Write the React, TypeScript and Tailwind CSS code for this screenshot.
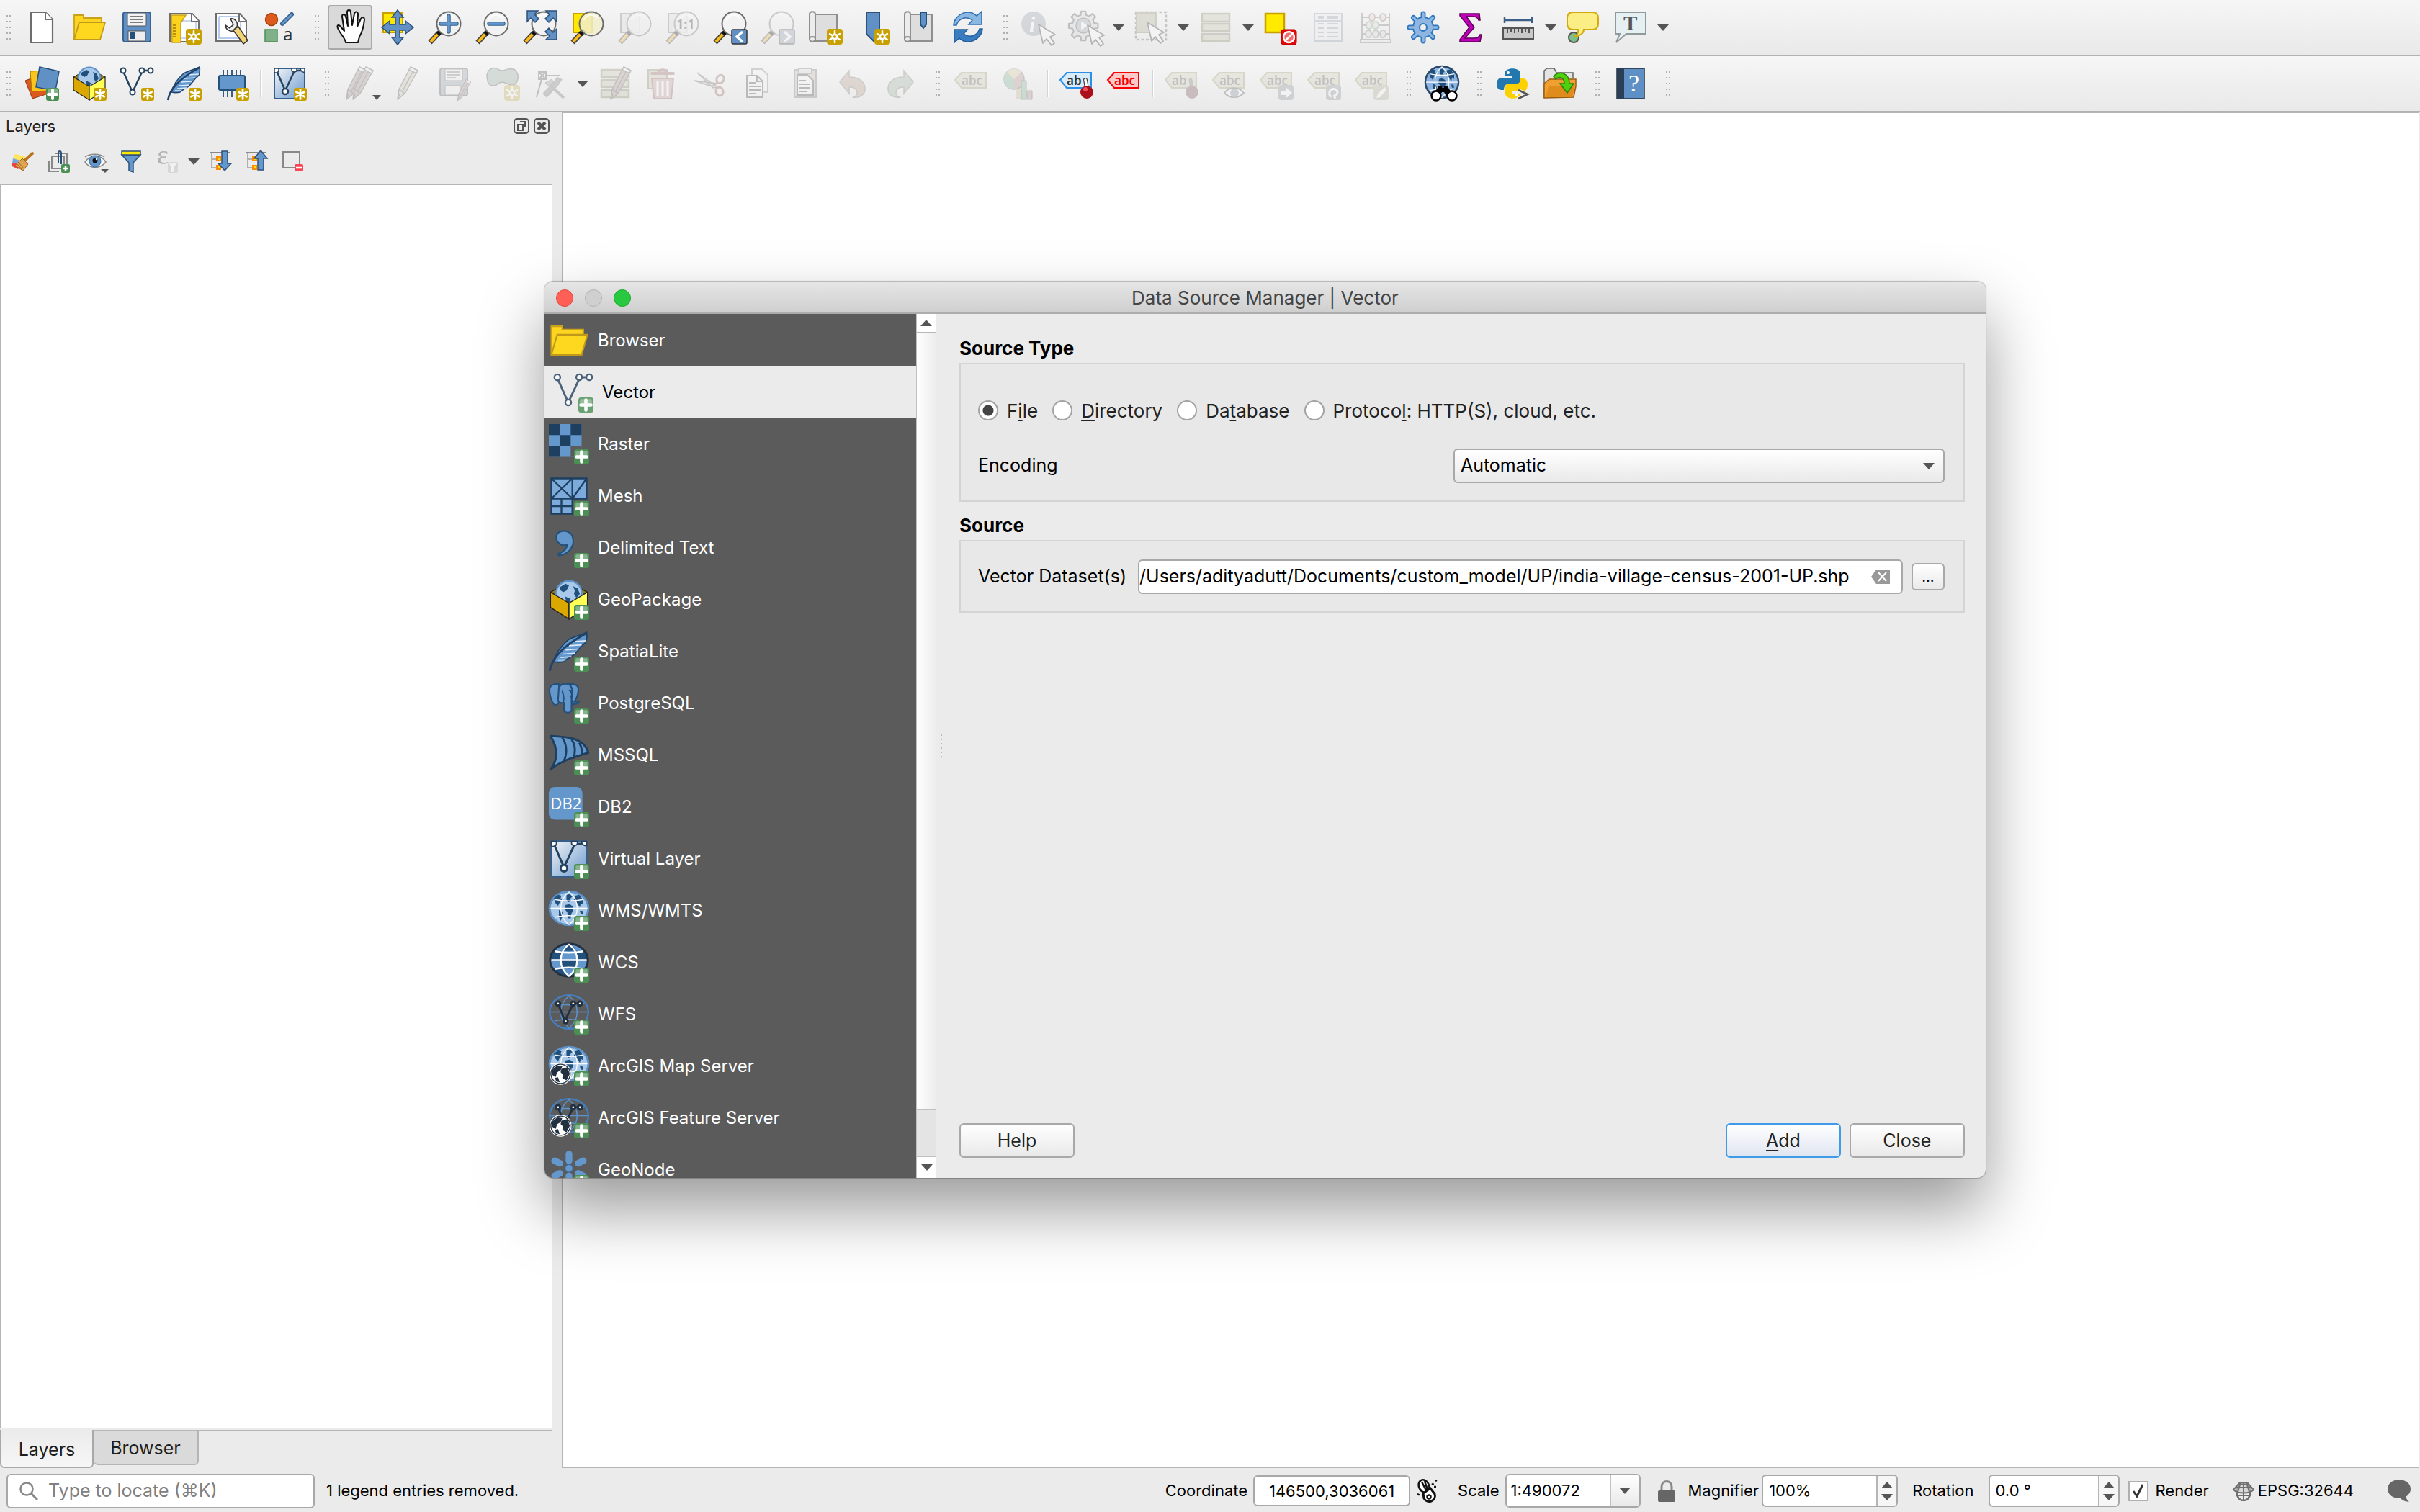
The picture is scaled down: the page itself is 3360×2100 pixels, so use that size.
import React from "react";

type Kids = { children?: React.ReactNode };

/* ---------- shared icon parts (48 x 48 grid) ---------- */

function Svg({ children }: Kids) {
  return (
    <svg viewBox="0 0 48 48" className="size-full overflow-visible" fill="none" aria-hidden="true">
      {children}
    </svg>
  );
}

function Plus() {
  return (
    <g>
      <rect x="30" y="30" width="18" height="18" rx="3" fill="#4b8f55" />
      <rect x="32" y="32" width="14" height="6" rx="1" fill="#85b58c" />
      <path d="M39 33v12M33 39h12" stroke="#fff" strokeWidth="4" strokeLinecap="round" />
    </g>
  );
}

function Star() {
  return (
    <g>
      <rect x="30" y="30" width="18" height="18" rx="3" fill="#c8a000" />
      <path d="M39 32.500v13M33.400 35.700l11.200 6.500M44.600 35.700l-11.200 6.500" stroke="#fff" strokeWidth="2.800" strokeLinecap="round" />
    </g>
  );
}

function Spark() {
  return (
    <g>
      <rect x="26" y="26" width="22" height="22" rx="4" fill="#c8a000" />
      <path d="M37 29v16M30 33l14 8M44 33l-14 8" stroke="#fff" strokeWidth="2.500" strokeLinecap="round" />
      <circle cx="37" cy="37" r="4.500" fill="#fff" />
      <circle cx="37" cy="37" r="2" fill="#c8a000" />
    </g>
  );
}

function Lens({ fill = "#f2f2f2", opacity = 1 }: { fill?: string; opacity?: number }) {
  return (
    <g>
      <path d="M3 45L16 31" stroke="#444" strokeWidth="7" />
      <path d="M4 44L14 33" stroke="#fcb813" strokeWidth="4" />
      <path d="M14 34l5-6" stroke="#111" strokeWidth="6" />
      <ellipse cx="29" cy="19" rx="16.500" ry="16.500" fill={fill} fillOpacity={opacity} stroke="#6b6b6b" strokeWidth="2" />
      <path d="M19 13c3-7 13-9 18-3" stroke="#fff" strokeWidth="3" strokeLinecap="round" opacity=".7" />
    </g>
  );
}

const LAND =
  "M6 9l5-4 4 1-1 3 2 2-3 3-2 4-3-3zM12 23l4 2 1 4-3 7-2-5zM21 5l4-1 3 3-3 3 2 2-4 2-2-3zM20 17l5-1 4 3 0 5-2 3-1 6-3 0-1-7-3-4zM31 6l5-1 5 6 0 6-3-2-1 5-4-6-3-3zM37 24l3 0 1 4-3 0z";

function EarthGrid({ dark = false }: { dark?: boolean }) {
  return (
    <g>
      <ellipse cx="24" cy="21" rx="23" ry="20" fill={dark ? "#8db5df" : "#a9c9ea"} stroke={dark ? "#2b4a6b" : "#5e93c9"} strokeWidth="2.500" />
      <path d={LAND} fill="#21507c" />
      <path d="M24 1.500c-13 10-13 29 0 39c13-10 13-29 0-39M2 21h44M7 10.500c10 2 24 2 34 0M7 31.500c10-2 24-2 34 0" stroke="#fff" strokeWidth="1.100" />
    </g>
  );
}

function NodesV({ color = "#24415e", fill = "#fff" }: { color?: string; fill?: string }) {
  return (
    <g stroke={color} strokeWidth="2.500" fill={fill}>
      <path d="M5 7l13 29L32 6h11" fill="none" />
      <circle cx="5" cy="6" r="3.500" strokeWidth="2" />
      <circle cx="31" cy="6" r="3.500" strokeWidth="2" />
      <circle cx="43" cy="6" r="3.500" strokeWidth="2" />
      <circle cx="18" cy="36" r="3.500" strokeWidth="2" />
    </g>
  );
}

function Cursor({ x, y }: { x: number; y: number }) {
  return (
    <g transform={`translate(${x} ${y})`}>
      <path d="M0 0l6 26 5-6 7 9 4-3-6-9 7-3z" fill="#fff" stroke="#333" strokeWidth="1.800" strokeLinejoin="round" />
    </g>
  );
}

function Pencil({ x = 0, y = 0, color = "#b08a8a" }: { x?: number; y?: number; color?: string }) {
  return (
    <g transform={`translate(${x} ${y})`} stroke="#555" strokeWidth="1.500" strokeLinejoin="round">
      <path d="M20 1l10 5-18 32-10 8 2-14z" fill={color} />
      <path d="M25 4L8 36M4 32l8 6M2 46l3-8" fill="none" />
      <path d="M20 1l10 5-2 4-10-5z" fill="#eee" />
    </g>
  );
}

function Tag({ text = "abc", fill = "#cfcfb0", stroke = "#9a9a6a", color = "#555" }: { text?: string; fill?: string; stroke?: string; color?: string }) {
  return (
    <g>
      <path d="M2 19L11 9h34v21H11z" fill={fill} stroke={stroke} strokeWidth="2" />
      <text x="11" y="26" fontSize="17" fontWeight="600" fontFamily="Noto Sans, sans-serif" fill={color}>
        {text}
      </text>
    </g>
  );
}

/* ---------- toolbar icons ---------- */

const NewDoc = () => (
  <Svg>
    <path d="M9 3h20l10 10v32H9z" fill="#fff" stroke="#6e6e6e" strokeWidth="2.200" />
    <path d="M29 3v10h10" stroke="#6e6e6e" strokeWidth="2" fill="#fff" />
  </Svg>
);
const Folder = () => (
  <Svg>
    <path d="M3 41V7h13v4h25v6" fill="#fdd41f" stroke="#c9a21a" strokeWidth="1.800" />
    <path d="M3 41l7-24h36l-7 24z" fill="#fdd81f" stroke="#c0991a" strokeWidth="1.800" />
  </Svg>
);
const Save = () => (
  <Svg>
    <rect x="5" y="3" width="38" height="41" rx="3" fill="#6090c4" stroke="#3a6492" strokeWidth="2" />
    <rect x="11" y="4" width="26" height="18" rx="1" fill="#f3f3f3" stroke="#555" />
    <path d="M15 9h18M15 13h18M15 17h18" stroke="#555" strokeWidth="1.500" />
    <rect x="12" y="29" width="24" height="14" fill="#eee" stroke="#555" />
    <rect x="15" y="31" width="6" height="9" fill="#24507c" />
  </Svg>
);
const NewLayout = () => (
  <Svg>
    <path d="M4 5h31l9 10v29H4z" fill="#fff" stroke="#6e6e6e" strokeWidth="2" />
    <path d="M18 15h22v24H18z" stroke="#b5ccee" strokeWidth="1.500" />
    <path d="M34 5v11h10" stroke="#6e6e6e" strokeWidth="2" fill="#fff" />
    <path d="M6 7h20l-7 11v27H7z" fill="#fcd21c" stroke="#c9a21a" strokeWidth="1.500" />
    <path d="M8 21h5M8 25h5M8 29h5M8 33h5M8 37h5" stroke="#a07a00" strokeWidth="1.500" />
    <Spark />
  </Svg>
);
const LayoutManager = () => (
  <Svg>
    <path d="M2 5h33l9 10v28H2z" fill="#fff" stroke="#6e6e6e" strokeWidth="2" />
    <path d="M6 9h28M6 9v30h30V17" stroke="#b5ccee" strokeWidth="2" />
    <path d="M34 5v11h10" stroke="#6e6e6e" strokeWidth="2" />
    <path d="M25 27l8-4 13 19-6 5z" fill="#f1d374" stroke="#333" strokeWidth="1.500" />
    <path d="M22 12c6-1 11 5 9 11l-6 6c-5 1-10-3-10-8l6 4 5-5z" fill="#eee" stroke="#333" strokeWidth="1.500" />
  </Svg>
);
const StyleManager = () => (
  <Svg>
    <circle cx="13" cy="13" r="8.500" fill="#dd5a1f" stroke="#a8430f" strokeWidth="1.500" />
    <path d="M28 19L41 6" stroke="#345f8d" strokeWidth="6" strokeLinecap="round" />
    <path d="M28 19L41 6" stroke="#6497cc" strokeWidth="3" strokeLinecap="round" />
    <rect x="4" y="27" width="17" height="17" fill="#7fb087" stroke="#4b8f55" strokeWidth="1.500" />
    <text x="29" y="42" fontSize="24" fontFamily="Noto Sans, sans-serif" fill="#333">a</text>
  </Svg>
);
const Hand = () => (
  <Svg>
    <path
      d="M18 45c-1-7-8-12-11-20c-2-5 2-5 4-2l5 6L13 9c0-4 4-4 5 0l3 13L20 3c0-4 5-4 5 0l2 18L30 5c1-4 5-3 5 1l-1 17 5-11c2-3 5-2 5 1c-1 10-4 19-7 24l-2 8z"
      fill="#fff" stroke="#111" strokeWidth="2" strokeLinejoin="round"
    />
  </Svg>
);
const PanSelection = () => (
  <Svg>
    <rect x="4" y="4" width="27" height="27" fill="#ffe800" stroke="#c8a000" strokeWidth="2" />
    <path
      d="M24 0l8 10h-5v10h8v-5l11 9-11 9v-5h-8v10h5l-8 10-8-10h5V28h-8v5L2 24l11-9v5h8V10h-5z"
      fill="#6090c4" stroke="#2c517a" strokeWidth="1.500"
    />
  </Svg>
);
const ZoomIn = () => (
  <Svg>
    <Lens />
    <path d="M29 8v22M18 19h22" stroke="#33618f" strokeWidth="5.500" strokeLinecap="round" />
    <path d="M29 8v22M18 19h22" stroke="#6497cc" strokeWidth="3.500" strokeLinecap="round" />
  </Svg>
);
const ZoomOut = () => (
  <Svg>
    <Lens />
    <path d="M19 19h20" stroke="#33618f" strokeWidth="5.500" strokeLinecap="round" />
    <path d="M19 19h20" stroke="#6497cc" strokeWidth="3.500" strokeLinecap="round" />
  </Svg>
);
const ZoomFull = () => (
  <Svg>
    <Lens />
    <path
      d="M6 1h15l-5 5 6 6-5 5-6-6-5 5zM47 1H32l5 5-6 6 5 5 6-6 5 5zM47 41H32l5-5-6-6 5-5 6 6 5-5z"
      fill="#6090c4" stroke="#2c517a" strokeWidth="1.500"
    />
  </Svg>
);
const ZoomSelection = () => (
  <Svg>
    <rect x="4" y="5" width="26" height="26" fill="#ffe800" stroke="#c8a000" strokeWidth="2" />
    <Lens fill="#f1eecb" opacity={0.85} />
  </Svg>
);
const ZoomLayer = () => (
  <Svg>
    <rect x="4" y="5" width="26" height="26" fill="#ddd" stroke="#777" strokeWidth="2" />
    <Lens fill="#eee" opacity={0.85} />
  </Svg>
);
const ZoomNative = () => (
  <Svg>
    <rect x="4" y="5" width="26" height="26" fill="#ddd" stroke="#777" strokeWidth="2" />
    <Lens fill="#eee" opacity={0.85} />
    <text x="15" y="26" fontSize="18" fontWeight="700" fontFamily="Noto Sans, sans-serif" fill="#333">1:1</text>
  </Svg>
);
const ZoomArrow = ({ next = false }: { next?: boolean }) => (
  <Svg>
    <Lens />
    <rect x="26" y="27" width="21" height="20" rx="2" fill={next ? "#8f9fb0" : "#6090c4"} stroke="#333" strokeWidth="1.500" />
    <path d={next ? "M33 30l8 7-8 7" : "M41 30l-8 7 8 7"} stroke="#fff" strokeWidth="3.500" />
  </Svg>
);
const Scroll = () => (
  <g stroke="#8f8f8f" strokeWidth="2">
    <path d="M10 6h30v37H10z" fill="#dedede" />
    <path d="M10 37V6c0-5-8-5-8 0v34c0 5 8 5 8 0c0-4-8-4-8 0" fill="#ececec" />
  </g>
);
const NewMapView = () => (
  <Svg>
    <Scroll />
    <Spark />
  </Svg>
);
const NewBookmark = () => (
  <Svg>
    <path d="M15 3h18v32l-8 8-10-10z" fill="#6090c4" stroke="#2c517a" strokeWidth="2" />
    <Spark />
  </Svg>
);
const Bookmarks = () => (
  <Svg>
    <Scroll />
    <path d="M24 3h8v17l-4 5-4-5z" fill="#6090c4" stroke="#24507c" strokeWidth="2" />
  </Svg>
);
const Refresh = () => (
  <Svg>
    <path d="M4 21C5 5 26-3 36 8l7-6v18H25l5-6c-8-6-19-3-22 7z" fill="#8ab8e3" stroke="#2f6fae" strokeWidth="1.500" />
    <path d="M44 26c-1 16-22 24-32 13l-7 6V27h18l-5 6c8 6 19 3 22-7z" fill="#3a7cc0" stroke="#245f9c" strokeWidth="1.500" />
  </Svg>
);
const Identify = () => (
  <Svg>
    <circle cx="17" cy="19" r="17" fill="#8f9fb0" />
    <text x="11" y="30" fontSize="30" fontStyle="italic" fontWeight="700" fontFamily="Liberation Serif, serif" fill="#fff">i</text>
    <Cursor x={24} y={20} />
  </Svg>
);
const GEAR =
  "M20 2h7l1 6 5 2 5-4 5 5-4 5 2 5 6 1v7l-6 1-2 5 4 5-5 5-5-4-5 2-1 6h-7l-1-6-5-2-5 4-5-5 4-5-2-5-6-1v-7l6-1 2-5-4-5 5-5 5 4 5-2z";
const RunAction = () => (
  <Svg>
    <g transform="scale(.86)">
      <path d={GEAR} fill="#d5d5d5" stroke="#555" strokeWidth="2.500" />
      <circle cx="23.500" cy="25" r="12" fill="#9aa6b2" stroke="#555" strokeWidth="1.500" />
      <path d="M20 18l10 7-10 7z" fill="#fff" />
    </g>
    <Cursor x={26} y={21} />
  </Svg>
);
const SelectFeatures = () => (
  <Svg>
    <rect x="3" y="3" width="42" height="38" stroke="#666" strokeWidth="2.500" strokeDasharray="4 2.500" />
    <rect x="4" y="4" width="27" height="27" fill="#b5b08e" stroke="#88845f" strokeWidth="2" />
    <Cursor x={19} y={17} />
  </Svg>
);
const SelectByValue = () => (
  <Svg>
    <path d="M5 5h38v11H5zM5 19h38v10H5zM5 33h38v10H5z" fill="#c6c3a6" stroke="#88845f" strokeWidth="2.500" />
  </Svg>
);
const Deselect = () => (
  <Svg>
    <rect x="3" y="5" width="26" height="26" fill="#ffea00" stroke="#c8a000" strokeWidth="2.500" />
    <rect x="25" y="27" width="21" height="21" rx="3" fill="#e00808" stroke="#b00" />
    <circle cx="35.500" cy="37.500" r="7.500" fill="#f36b6b" stroke="#fff" strokeWidth="2.500" />
    <path d="M30 43l11-11" stroke="#fff" strokeWidth="2.500" />
  </Svg>
);
const AttributeTable = () => (
  <Svg>
    <rect x="5" y="5" width="38" height="38" fill="#eee" stroke="#8f9fb0" strokeWidth="2" />
    <path d="M5 15h38" stroke="#8f9fb0" strokeWidth="2" />
    <path d="M10 10h8M23 10h15" stroke="#8f9fb0" strokeWidth="4" />
    <path d="M10 19h8M10 25h8M10 31h8M10 37h8M23 19h15M23 25h15M23 31h15M23 37h15" stroke="#8f9fb0" strokeWidth="2" />
  </Svg>
);
const Abacus = () => (
  <Svg>
    <path d="M5 4v37M43 4v37M5 10h38M5 21h38M5 33h38M3 41h42v4H3z" stroke="#777" strokeWidth="2" />
    <g fill="#ddd" stroke="#888" strokeWidth="2">
      <ellipse cx="19" cy="10" rx="4" ry="5" stroke="#a77" />
      <ellipse cx="34" cy="10" rx="4" ry="5" stroke="#a77" />
      <ellipse cx="15" cy="21" rx="4" ry="5" stroke="#7a7" />
      <ellipse cx="24" cy="21" rx="4" ry="5" stroke="#7a7" />
      <ellipse cx="14" cy="33" rx="4" ry="5" />
      <ellipse cx="24" cy="33" rx="4" ry="5" />
      <ellipse cx="34" cy="33" rx="4" ry="5" />
    </g>
  </Svg>
);
const Toolbox = () => (
  <Svg>
    <g stroke="#2f78bf" strokeWidth="7" strokeLinecap="round">
      <path d="M24 5v38M5 24h38M10.500 10.500l27 27M37.500 10.500l-27 27" />
    </g>
    <circle cx="24" cy="24" r="14" fill="#8fb6e0" stroke="#2f78bf" strokeWidth="2" />
    <g stroke="#8fb6e0" strokeWidth="3.500" strokeLinecap="round">
      <path d="M24 5v38M5 24h38M10.500 10.500l27 27M37.500 10.500l-27 27" />
    </g>
    <circle cx="24" cy="24" r="5" fill="#eee" stroke="#2f78bf" strokeWidth="2" />
  </Svg>
);
const Sigma = () => (
  <Svg>
    <path d="M9 5h27l1 9h-2c-1-4-4-5-8-5H18l11 15-13 15h13c5 0 7-2 8-5h2l-2 10H9v-3l13-17L9 8z" fill="#c000b8" stroke="#5c0058" strokeWidth="1.500" />
  </Svg>
);
const Measure = () => (
  <Svg>
    <path d="M5 14h38M5 10v8M43 10v8" stroke="#3c5f85" strokeWidth="2.500" />
    <rect x="3" y="25" width="42" height="15" fill="#c9c9c9" stroke="#555" strokeWidth="2" />
    <path d="M9 26v6M14 26v4M19 26v6M24 26v4M29 26v6M34 26v4M39 26v6" stroke="#555" strokeWidth="2" />
  </Svg>
);
const MapTip = () => (
  <Svg>
    <ellipse cx="11" cy="38" rx="7" ry="7" fill="#7fbf87" stroke="#555" strokeWidth="2" />
    <path d="M10 3h27c5 0 8 3 8 8v8c0 5-3 8-8 8h-12c0 5-5 9-13 10c4-2 6-6 5-10h-7c-5 0-8-3-8-8v-8c0-5 3-8 8-8z" fill="#fbee85" stroke="#d2aa10" strokeWidth="2" />
  </Svg>
);
const TextAnnotation = () => (
  <Svg>
    <path d="M3 3h42v30H18L4 45l5-12H3z" fill="#e6f0f3" stroke="#8f9a9c" strokeWidth="2" />
    <text x="14" y="28" fontSize="29" fontWeight="700" fontFamily="Liberation Serif, serif" fill="#555">T</text>
  </Svg>
);

const DataSource = () => (
  <Svg>
    <path d="M1 20l22-8 10 26-22 7z" fill="#dc5a20" stroke="#8f3a10" />
    <path d="M8 7l22-1 3 28-23 1z" fill="#fcc51a" stroke="#a07a00" />
    <path d="M21 1l27 6-5 27-27-5z" fill="#6090c4" stroke="#24507c" strokeWidth="1.500" />
    <Plus />
  </Svg>
);
const GpkgBase = () => (
  <g>
    <path d="M2 15l22-12 22 12-22 12z" fill="#9a7500" stroke="#222" strokeWidth="1" />
    <circle cx="24" cy="17" r="15.500" fill="#a9c9ea" stroke="#5e93c9" strokeWidth="2" />
    <path d="M13 9l7-4 4 2-3 6-4 2-4-3zM29 8l5 2 3 7-4 5-3-5 1-4zM19 20l7 3-2 6-3-3z" fill="#21507c" />
    <path d="M2 15l22 13v19L2 33z" fill="#daa800" stroke="#222" strokeWidth="1.200" />
    <path d="M46 15L24 28v19l22-14z" fill="#ffff55" stroke="#222" strokeWidth="1.200" />
  </g>
);
const Gpkg = ({ star = false }: { star?: boolean }) => (
  <Svg>
    <GpkgBase />
    {star ? <Star /> : <Plus />}
  </Svg>
);
const VectorIcon = ({ star = false }: { star?: boolean }) => (
  <Svg>
    <NodesV />
    {star ? <Star /> : <Plus />}
  </Svg>
);
const Feather = ({ star = false }: { star?: boolean }) => (
  <Svg>
    <path d="M45 1c1 5 0 9-1 12c-6 4-8 9-13 14c-5 4-9 5-13 9c-4 1-8 1-12 0c2-9 9-19 17-26c7-4 14-5 22-9z" fill="#6497cc" stroke="#1f4368" strokeWidth="1.500" />
    <path d="M14 31l13-1M17 27l14-1M20 22l15-1M24 17l15-1M30 12l14-1M11 34l8 0" stroke="#dcebfa" strokeWidth="1.500" />
    <path d="M1 47c2-10 6-16 12-22C22 15 34 8 45 2" stroke="#1f4368" strokeWidth="2.500" />
    {star ? <Star /> : <Plus />}
  </Svg>
);
const Chip = () => (
  <Svg>
    <path d="M12 5v38M18 5v38M24 5v38M30 5v38M36 5v30" stroke="#3a5f85" strokeWidth="2" />
    <rect x="6" y="13" width="36" height="20" rx="2" fill="#6497cc" stroke="#24507c" strokeWidth="2" />
    <Star />
  </Svg>
);
const Virtual = ({ star = false }: { star?: boolean }) => (
  <Svg>
    <defs>
      <linearGradient id={star ? "virtual-star" : "virtual-plus"} x1="0" y1="0" x2="1" y2="1">
        <stop offset="0" stopColor="#f2f4f6" />
        <stop offset="1" stopColor="#6c9ace" />
      </linearGradient>
    </defs>
    <rect x="3" y="3" width="42" height="42" rx="2" fill={star ? "url(#virtual-star)" : "url(#virtual-plus)"} stroke="#345f8d" strokeWidth="2" />
    <g stroke="#24415e" strokeWidth="2.500" fill="#fff">
      <path d="M6 6l12 28L31 6h12" fill="none" />
      <circle cx="18" cy="35" r="4" strokeWidth="2.500" />
      <path d="M3 3h6v3c0 3-6 4-6 2zM27 3h7v2c0 4-7 4-7 0zM39 3h6v5c-3 1-6-2-6-5z" strokeWidth="1.500" />
    </g>
    {star ? <Star /> : <Plus />}
  </Svg>
);
const Edits = () => (
  <Svg>
    <Pencil x={3} />
    <Pencil x={12} />
  </Svg>
);
const Edit = () => (
  <Svg>
    <Pencil x={8} color="#c9c6a8" />
  </Svg>
);
const SaveEdits = () => (
  <Svg>
    <g transform="translate(-2 0)">
      <rect x="5" y="3" width="38" height="38" rx="3" fill="#8f9fae" stroke="#555" strokeWidth="2" />
      <rect x="12" y="4" width="24" height="16" fill="#eee" stroke="#555" />
      <path d="M15 8h18M15 12h18M15 16h12" stroke="#555" strokeWidth="1.500" />
      <rect x="12" y="27" width="22" height="13" fill="#eee" stroke="#555" />
    </g>
    <g transform="translate(26 18) scale(.65)">
      <Pencil />
    </g>
  </Svg>
);
const AddFeature = () => (
  <Svg>
    <path d="M3 20C-1 5 10-1 19 5c7 4 12-5 22 0c8 6 4 24-6 21c-8-3-13-6-18-1c-6 4-13 2-14-5z" fill="#8fae9c" stroke="#555" strokeWidth="1.500" />
    <g opacity=".8">
      <Spark />
    </g>
  </Svg>
);
const Vertex = () => (
  <Svg>
    <path d="M8 8h10v10H8zM8 8l10 10M18 8L8 18M18 13h20M12 18L5 43" stroke="#555" strokeWidth="2" />
    <path d="M21 24l22 20M38 19l-4 6-15 16-3-3 15-16 3-5z" stroke="#777" strokeWidth="4" />
    <path d="M17 23l9-5 3 4-8 6z" fill="#999" stroke="#666" />
  </Svg>
);
const ModifyAttributes = () => (
  <Svg>
    <path d="M5 5h38v10H5zM5 19h38v10H5zM5 33h38v10H5z" fill="#c6c3a6" stroke="#88845f" strokeWidth="2.500" />
    <Pencil x={16} />
  </Svg>
);
const Trash = () => (
  <Svg>
    <rect x="4" y="5" width="26" height="26" fill="#c6c3a6" stroke="#88845f" strokeWidth="2" />
    <path d="M9 17h30l-3 28H12z" fill="#c99" stroke="#a55a5a" strokeWidth="2" />
    <path d="M17 21v20M24 21v20M31 21v20" stroke="#fff" strokeWidth="3" />
    <path d="M9 10h30M18 9c0-5 12-5 12 0" stroke="#a55a5a" strokeWidth="4" strokeLinecap="round" />
  </Svg>
);
const Cut = () => (
  <Svg>
    <path d="M2 20l32 4-8 4zM6 9l28 20-6 1z" fill="#ccc" stroke="#666" strokeWidth="1.500" />
    <ellipse cx="38" cy="18" rx="5" ry="6" stroke="#a55a5a" strokeWidth="3" transform="rotate(30 38 18)" />
    <ellipse cx="37" cy="35" rx="5" ry="6" stroke="#a55a5a" strokeWidth="3" transform="rotate(-20 37 35)" />
  </Svg>
);
const Copy = () => (
  <Svg>
    <path d="M16 4h14l8 8v24H16z" fill="#f6f6f6" stroke="#888" strokeWidth="2" />
    <path d="M9 13h14l8 8v22H9z" fill="#f8f8f8" stroke="#444" strokeWidth="2" />
    <path d="M23 13v8h8M12 23h10M12 28h16M12 33h16M12 38h10" stroke="#444" strokeWidth="2" />
  </Svg>
);
const Paste = () => (
  <Svg>
    <rect x="9" y="5" width="30" height="38" fill="#c4b9aa" stroke="#777" strokeWidth="2" />
    <rect x="15" y="3" width="18" height="7" fill="#ddd" stroke="#777" strokeWidth="2" />
    <path d="M13 12h14l8 8v20H13z" fill="#f8f8f8" stroke="#444" strokeWidth="2" />
    <path d="M16 20h9M16 25h15M16 30h15M16 35h10" stroke="#444" strokeWidth="2" />
  </Svg>
);
const Undo = ({ redo = false }: { redo?: boolean }) => (
  <Svg>
    <g transform={redo ? "translate(48 0) scale(-1 1)" : undefined}>
      <path d="M6 22L19 6v9c15 0 23 8 22 18c-1 8-9 11-16 10c9-4 5-15-6-14v9z" fill={redo ? "#98b39f" : "#c09a80"} stroke="#7a7a6e" strokeWidth="1.500" />
    </g>
  </Svg>
);
const TagOnly = () => (
  <Svg>
    <Tag />
  </Svg>
);
const Diagram = () => (
  <Svg>
    <circle cx="18" cy="18" r="14" fill="#c08a8a" stroke="#666" strokeWidth="1.500" />
    <path d="M18 18L18 32A14 14 0 0 1 8 8z" fill="#6fb58c" />
    <path d="M18 18L8 8a14 14 0 0 1 20 0z" fill="#d5c98c" />
    <path d="M20 32h8v14h-8z" fill="#c5bc8c" />
    <path d="M28 20h7v26h-7z" fill="#6fb58c" stroke="#555" />
    <path d="M36 34h7v12h-7z" fill="#c08a8a" stroke="#555" />
  </Svg>
);
const PinnedLabel = () => (
  <Svg>
    <Tag text="ab" fill="#d7ebfb" stroke="#2b8fe8" color="#333" />
    <path d="M37 19l2 12" stroke="#444" strokeWidth="6" strokeLinecap="round" />
    <path d="M37 19l2 11" stroke="#fff" strokeWidth="3.500" strokeLinecap="round" />
    <circle cx="39" cy="36" r="9" fill="#ab0f1c" />
    <circle cx="37" cy="32" r="3" fill="#f0525c" />
  </Svg>
);
const RedLabel = () => (
  <Svg>
    <Tag fill="#ffc9c9" stroke="#fb0000" color="#f00000" />
  </Svg>
);
const PinLabel = () => (
  <Svg>
    <Tag text="ab" />
    <path d="M37 19l2 12" stroke="#777" strokeWidth="5" strokeLinecap="round" />
    <circle cx="39" cy="36" r="9" fill="#7d4a52" />
  </Svg>
);
const ShowLabel = () => (
  <Svg>
    <Tag />
    <path d="M18 37c7-9 20-9 27 0c-7 8-20 8-27 0z" fill="#fff" stroke="#555" strokeWidth="2" />
    <circle cx="32" cy="37" r="6" fill="#7f93a8" />
  </Svg>
);
const BadgeLabel = ({ kind }: { kind: "move" | "rotate" | "change" }) => (
  <Svg>
    <Tag />
    <rect x="27" y="26" width="21" height="21" rx="4" fill={kind === "change" ? "#b3ae8d" : "#889099"} />
    {kind === "move" && <path d="M30 34h7v-5l9 8-9 8v-5h-7z" fill="#fff" />}
    {kind === "rotate" && <path d="M34 43c-5-6-1-13 6-11c5 2 3 9-2 8M38 40l2 5" stroke="#fff" strokeWidth="3" />}
    {kind === "change" && <path d="M31 44l3-7 9-8 1 5-8 9z" fill="#fff" />}
  </Svg>
);
const MetaSearch = () => (
  <Svg>
    <g transform="translate(0 -1) scale(1 1.100)">
      <EarthGrid dark />
    </g>
    <path d="M10 42l10-15h4v3h3v-3h4l10 15-8 4-6-10h-3l-6 10z" fill="#000" />
    <circle cx="16" cy="41" r="6.500" fill="#fff" stroke="#000" strokeWidth="2.500" />
    <circle cx="38" cy="41" r="6.500" fill="#fff" stroke="#000" strokeWidth="2.500" />
  </Svg>
);
const Python = () => (
  <Svg>
    <path d="M13 10c0-9 22-9 22 0v10c0 4-2 5-5 5H18c-4 0-6 3-6 8H8C0 33 0 17 8 16h16v-3H13z" fill="#2277ae" />
    <path d="M35 17h4c8 0 8 17 0 18H24v3h11c0 9-21 9-21 0V30c0-4 2-6 6-6h10c4 0 5-3 5-7z" fill="#fdd000" />
    <circle cx="18" cy="9" r="2" fill="#fff" />
    <circle cx="30" cy="40" r="2" fill="#fff" />
    <path d="M31 33l14 6-14 6" stroke="#eee" strokeWidth="5" />
    <path d="M32 33l13 6-13 6" stroke="#555" strokeWidth="2.500" />
  </Svg>
);
const Downloads = () => (
  <Svg>
    <path d="M2 44V6l4-3h10l3 6h23v8" fill="#e3e3e3" stroke="#666" strokeWidth="1.500" />
    <path d="M2 44V24l7-6h37v10l-3 15z" fill="#f0a030" stroke="#9a5d10" strokeWidth="1.500" />
    <path d="M4 43l4-15h36l-3 15z" fill="#e08c1c" />
    <path d="M15 14c9-9 22-4 22 10h6L34 37 24 24h6c0-8-7-11-12-6z" fill="#4fd10c" stroke="#2a7f0c" strokeWidth="1.500" />
  </Svg>
);
const HelpBook = () => (
  <Svg>
    <rect x="5" y="3" width="38" height="42" fill="#5e90c6" stroke="#24303c" strokeWidth="1.500" />
    <rect x="5" y="3" width="10" height="42" fill="#2a3f55" />
    <text x="21" y="35" fontSize="34" fontFamily="Liberation Serif, serif" fill="#fff">?</text>
  </Svg>
);

/* ---------- sidebar-only icons ---------- */

const Raster = () => (
  <Svg>
    <rect x="0" y="0" width="39" height="39" fill="#6497cc" />
    <path d="M0 0h13v13H0zM26 0h13v13H26zM13 13h13v13H13zM0 26h13v13H0z" fill="#1d3f60" />
    <rect x="26" y="26" width="13" height="13" fill="#5b5b5b" />
    <Plus />
  </Svg>
);
const Mesh = () => (
  <Svg>
    <path d="M3 3h42v24H28v18H3z" fill="#7caadb" />
    <path d="M3 3h42v24H3zM28 3v42H3V3M3 3l25 24M28 3L3 27M45 3L28 27M3 36h25M15 27v18" stroke="#1d3f60" strokeWidth="2" />
    <Plus />
  </Svg>
);
const Comma = () => (
  <Svg>
    <path d="M9 10c1-8 18-10 20 4c1 10-7 18-17 19l-1-2c7-2 11-7 11-11c-7 3-14-3-13-10z" fill="#6497cc" stroke="#24507c" strokeWidth="1.800" />
    <Plus />
  </Svg>
);
const Postgres = () => (
  <Svg>
    <g fill="#6497cc" stroke="#24507c" strokeWidth="1.800" strokeLinejoin="round">
      <path d="M12 1C3 0 0 4 1 11c1 7 4 15 7 15c2 0 4-3 5-4z" />
      <path d="M24 1c9-1 12 3 11 9c-1 6-3 10-5 12l6 0c-2 3-5 3-8 3z" />
      <path d="M12 5c3-6 13-6 15 0c2 6 0 12 0 15v12c0 4-9 4-9-1v-8c-4 1-7 0-7-3z" />
      <path d="M17 22c2-4 0-9-1-13M24 8c4 2 4 6 2 9" fill="none" />
    </g>
    <Plus />
  </Svg>
);
const MsSql = () => (
  <Svg>
    <path d="M2 1c20 1 40 2 45 20c-16 5-32 9-45 20c10-13 8-27 0-40z" fill="#6497cc" stroke="#1d3f60" strokeWidth="2.500" strokeLinejoin="round" />
    <path d="M16 3c6 9 6 20 1 30M27 5c5 7 5 16 2 23M36 9c3 4 4 11 3 15" stroke="#1d3f60" strokeWidth="2.500" />
    <Plus />
  </Svg>
);
const Db2 = () => (
  <Svg>
    <rect x="0" y="0" width="40" height="39" rx="7" fill="#6497cc" />
    <text x="2" y="27" fontSize="19" fontFamily="Open Sans, sans-serif" fill="#fff">DB2</text>
    <Plus />
  </Svg>
);
const Wms = () => (
  <Svg>
    <EarthGrid />
    <Plus />
  </Svg>
);
const Wcs = () => (
  <Svg>
    <ellipse cx="24" cy="21" rx="23" ry="20" fill="#6497cc" />
    <path d="M5 10h11l-2 11H1c0-4 2-8 4-11zM32 10h11c2 3 4 7 4 11H34zM14 21h20l-2 10H16z" fill="#21507c" />
    <path d="M5 31h11c2 5 5 8 8 9c-9 0-15-4-19-9zM43 31H32c-2 5-5 8-8 9c9 0 15-4 19-9z" fill="#21507c" />
    <path d="M16 10h16v-1c-2-4-5-6-8-8c-3 2-6 5-8 8z" fill="#21507c" />
    <ellipse cx="24" cy="21" rx="22.500" ry="19.500" stroke="#22303f" strokeWidth="2.500" />
    <path d="M24 2c-13 10-13 28 0 38c13-10 13-28 0-38M3 21h42M7 10.500c10 2 24 2 34 0M7 31.500c10-2 24-2 34 0" stroke="#fff" strokeWidth="2" />
    <Plus />
  </Svg>
);
const WfsBase = () => (
  <g>
    <ellipse cx="24" cy="21" rx="23" ry="20" stroke="#4480c0" strokeWidth="2" />
    <path d="M24 2c-13 10-13 28 0 38c13-10 13-28 0-38M2 21h44M8 11c10 2 24 2 34 0M7 31.500c10-2 24-2 34 0" stroke="#5b93cf" strokeWidth="1.300" />
    <g stroke="#22303f" strokeWidth="2.500" fill="#fff">
      <path d="M11 11l8 21 10-21h9" fill="none" />
      <circle cx="11" cy="11" r="2.500" />
      <circle cx="29" cy="11" r="2.500" />
      <circle cx="37" cy="11" r="2.500" />
      <circle cx="20" cy="32" r="2.500" />
    </g>
  </g>
);
const Wfs = () => (
  <Svg>
    <WfsBase />
    <Plus />
  </Svg>
);
const ArcBall = () => (
  <g>
    <circle cx="14" cy="33" r="13" fill="#fff" />
    <circle cx="14" cy="33" r="11.500" fill="#fff" stroke="#22303f" strokeWidth="1.200" />
    <path d="M4 28l6-5 6 1-2 5-4 2-2 6-4-3zM15 27l7-2 3 8-4 8-5-3 1-4-3-3zM7 38l4-1 2 6-4-1z" fill="#22303f" />
  </g>
);
const ArcMap = () => (
  <Svg>
    <EarthGrid />
    <ArcBall />
    <Plus />
  </Svg>
);
const ArcFeature = () => (
  <Svg>
    <WfsBase />
    <ArcBall />
    <Plus />
  </Svg>
);
const GeoNode = () => (
  <Svg>
    <g stroke="#6497cc" strokeWidth="8" strokeLinecap="round">
      <path d="M24 5v8M24 31v8M7 13l6 3M41 13l-6 3M7 31l6-3M41 31l-6-3" />
    </g>
    <circle cx="24" cy="22" r="4.500" fill="#6497cc" stroke="#3a6da5" />
    <Plus />
  </Svg>
);

/* ---------- toolbar building blocks ---------- */

function Grip() {
  return (
    <div className="flex w-[25px] shrink-0 justify-center" aria-hidden="true">
      <div className="grid h-[34px] w-2 grid-cols-2 content-between justify-between">
        {Array.from({ length: 10 }, (_, i) => (
          <span key={i} className="size-[2px] bg-[#b0b0b0]" />
        ))}
      </div>
    </div>
  );
}

function Caret({ small = false }: { small?: boolean }) {
  return (
    <svg viewBox="0 0 16 9" className={small ? "w-3 shrink-0" : "w-4 shrink-0"} aria-hidden="true">
      <path d="M0 0h16L8 9z" fill="#555" />
    </svg>
  );
}

type ToolProps = { label: string; off?: boolean; active?: boolean; menu?: boolean; corner?: boolean; children: React.ReactNode };

function Tool({ label, off, active, menu, corner, children }: ToolProps) {
  return (
    <>
      <button type="button" aria-label={label} disabled={off} className="relative flex w-[66px] shrink-0 items-center justify-center">
        <span
          className={
            active
              ? "flex size-[62px] items-center justify-center rounded border-2 border-[#a9a9a9] bg-[#d9d9d9]"
              : off
                ? "flex size-[62px] items-center justify-center opacity-30 saturate-75"
                : "flex size-[62px] items-center justify-center"
          }
        >
          <span className="size-12">{children}</span>
        </span>
        {corner && (
          <span className="absolute right-1 bottom-2">
            <Caret small />
          </span>
        )}
      </button>
      {menu && (
        <button type="button" aria-label={label + " menu"} className="flex w-6 shrink-0 items-center justify-center">
          <Caret />
        </button>
      )}
    </>
  );
}

function Sep() {
  return (
    <div className="flex w-[14px] shrink-0 items-center justify-center" aria-hidden="true">
      <span className="h-[38px] w-[3px] border-l-2 border-[#d4d4d4] bg-white" />
    </div>
  );
}

function Bar({ children }: Kids) {
  return (
    <div className="flex h-[78px] shrink-0 overflow-hidden border-b-2 border-[#b2b2b2] bg-linear-to-b from-[#f6f6f6] to-[#e9e9e9]">{children}</div>
  );
}

function Group({ label, children }: Kids & { label: string }) {
  return (
    <div role="toolbar" aria-label={label} className="mr-[7px] flex shrink-0 items-center">
      <Grip />
      {children}
    </div>
  );
}

/* ---------- layers panel icons (32 x 32 grid) ---------- */

function Small({ children }: Kids) {
  return (
    <svg viewBox="0 0 32 32" className="size-8 overflow-visible" fill="none" aria-hidden="true">
      {children}
    </svg>
  );
}

function PanelTool({ label, off, children }: Kids & { label: string; off?: boolean }) {
  return (
    <button type="button" aria-label={label} disabled={off} className={off ? "flex w-[50px] justify-center opacity-30" : "flex w-[50px] justify-center"}>
      {children}
    </button>
  );
}

const TreeLines = () => (
  <g>
    <path d="M2 4h27" stroke="#888" strokeWidth="2" />
    <path d="M4 4v22M4 13h6M4 25h6" stroke="#b0b0b0" strokeWidth="2" />
    <path d="M11 10h5v5h-5zM11 22h5v5h-5z" fill="#ffe000" stroke="#ff8a00" strokeWidth="2" />
  </g>
);

function LayersToolbar() {
  return (
    <div role="toolbar" aria-label="Layers tools" className="flex h-16 shrink-0 items-center pl-[7px]">
      <PanelTool label="Open layer styling">
        <Small>
          <path d="M5 6l14 3-3 8-14-4z" fill="#ffe45c" />
          <path d="M2 12l14 4-3 5-12-2z" fill="#7aa6dc" />
          <path d="M1 18l13 3-5 6-8-4z" fill="#f04040" />
          <path d="M29 5L17 16" stroke="#b8741a" strokeWidth="4" strokeLinecap="round" />
          <path d="M15 12l8 8-7 9-11-7z" fill="#dfa452" stroke="#a8671a" />
          <path d="M10 18l7 8M8 20l6 7" stroke="#a8671a" />
        </Small>
      </PanelTool>
      <PanelTool label="Add group">
        <Small>
          <path d="M10 5h17v20M6 9h17v17H6zM2 15v15h14" stroke="#888" strokeWidth="2" />
          <path d="M19 20V5c0-4-4-4-4 0v14" stroke="#2c517a" strokeWidth="2" />
          <rect x="19" y="20" width="12" height="12" rx="2" fill="#4b8f55" />
          <path d="M25 22v8M21 26h8" stroke="#fff" strokeWidth="2.500" />
        </Small>
      </PanelTool>
      <PanelTool label="Manage map themes">
        <Small>
          <path d="M2 17c8-11 22-11 29 0c-8 10-22 10-29 0z" fill="#f7f7f7" stroke="#888" strokeWidth="1.500" />
          <path d="M2 10C9 5 22 5 29 10" stroke="#888" strokeWidth="1.500" />
          <circle cx="16" cy="16" r="8" fill="#6497cc" stroke="#3a6da5" />
          <circle cx="16" cy="15" r="3.500" fill="#111" />
          <circle cx="18" cy="13" r="1.200" fill="#fff" />
          <path d="M24 27h11l-5 5z" fill="#555" />
        </Small>
      </PanelTool>
      <PanelTool label="Filter legend">
        <Small>
          <path d="M3 7l10 11v11l6 2V18L29 7z" fill="#6497cc" stroke="#2c517a" strokeWidth="1.500" />
          <path d="M3 2h26v5H3z" fill="#ffe800" stroke="#2c517a" strokeWidth="1.500" />
        </Small>
      </PanelTool>
      <PanelTool label="Filter by expression" off>
        <Small>
          <text x="2" y="20" fontSize="38" fontFamily="Liberation Serif, serif" fill="#333">ε</text>
          <rect x="17" y="17" width="14" height="15" rx="2" fill="#aaa" />
          <path d="M18 18h12l-4 6v7h-4v-7z" fill="#fff" />
        </Small>
      </PanelTool>
      <button type="button" aria-label="Filter by expression menu" className="flex w-6 items-center justify-center">
        <Caret />
      </button>
      <PanelTool label="Expand all">
        <Small>
          <TreeLines />
          <path d="M18 2h8v17h5L22 29l-9-10h5z" fill="#6497cc" stroke="#2c517a" strokeWidth="1.500" />
        </Small>
      </PanelTool>
      <PanelTool label="Collapse all">
        <Small>
          <TreeLines />
          <path d="M18 28h8V12h5L22 1l-9 11h5z" fill="#6497cc" stroke="#2c517a" strokeWidth="1.500" />
        </Small>
      </PanelTool>
      <PanelTool label="Remove layer">
        <Small>
          <rect x="3" y="3" width="23" height="22" stroke="#888" strokeWidth="2" />
          <rect x="19" y="20" width="12" height="10" rx="2" fill="#fb4550" />
          <path d="M21 25h8" stroke="#fff" strokeWidth="2.500" />
        </Small>
      </PanelTool>
    </div>
  );
}

function LayersPanel() {
  return (
    <aside className="flex w-[767px] shrink-0 flex-col">
      <div className="flex h-9 shrink-0 items-center justify-between pt-[2px] pr-1 pl-2 text-[22px] leading-7">
        <h2>Layers</h2>
        <div className="flex gap-[6px]">
          <button type="button" aria-label="Float panel">
            <svg viewBox="0 0 22 22" className="size-[22px]" fill="none" stroke="#555" strokeWidth="2">
              <rect x="1" y="1" width="20" height="20" rx="4" />
              <path d="M9 5h7v8M6 9h7v8H6z" />
            </svg>
          </button>
          <button type="button" aria-label="Close panel">
            <svg viewBox="0 0 22 22" className="size-[22px]" fill="none" stroke="#555" strokeWidth="2">
              <rect x="1" y="1" width="20" height="20" rx="4" />
              <path d="M6 6l10 10M16 6L6 16" strokeWidth="4" />
            </svg>
          </button>
        </div>
      </div>
      <LayersToolbar />
      <div className="flex-1 border border-[#b5b5b5] bg-white" />
      <div role="tablist" className="mt-[2px] flex h-[53px] shrink-0 items-start border-t-2 border-[#b5b5b5] text-[25px]">
        <button type="button" role="tab" aria-selected="true" className="-mt-[2px] h-[53px] w-[130px] rounded-b-md border-2 border-t-0 border-[#a8a8a8] bg-linear-to-b from-[#ebebeb] to-[#f6f6f6] pt-1">
          Layers
        </button>
        <button type="button" role="tab" aria-selected="false" className="h-[47px] w-[146px] rounded-b-md border-r-2 border-b-2 border-[#b5b5b5] bg-[#dadada] pt-[2px]">
          Browser
        </button>
      </div>
    </aside>
  );
}

/* ---------- status bar ---------- */

function Spinner({ id, value, width }: { id: string; value: string; width: string }) {
  return (
    <div className={width + " flex h-[45px] overflow-hidden rounded-md border-2 border-[#a8a8a8] bg-white"}>
      <input id={id} defaultValue={value} className="min-w-0 flex-1 px-2 outline-none" />
      <div className="flex w-7 shrink-0 flex-col items-center justify-center gap-2 border-l-2 border-[#b5b5b5] bg-[#f6f6f6]">
        <button type="button" aria-label={"Increase " + id} className="rotate-180">
          <Caret />
        </button>
        <button type="button" aria-label={"Decrease " + id}>
          <Caret />
        </button>
      </div>
    </div>
  );
}

function StatusBar() {
  return (
    <footer className="flex h-[61px] shrink-0 items-center pt-[2px] pr-3 pl-[9px] text-[22px] text-black">
      <label className="flex h-12 w-[428px] items-center gap-[14px] rounded-md border-2 border-[#a8a8a8] bg-white px-4">
        <svg viewBox="0 0 26 26" className="size-[26px] shrink-0" fill="none" stroke="#888" strokeWidth="2.500" aria-hidden="true">
          <circle cx="10" cy="10" r="8.500" />
          <path d="M16 16l9 9" strokeWidth="3" />
        </svg>
        <input aria-label="Type to locate" placeholder="Type to locate (⌘K)" className="min-w-0 flex-1 text-[25px] outline-none placeholder:text-[#808080]" />
      </label>
      <p className="ml-4">1 legend entries removed.</p>

      <label htmlFor="coordinate" className="ml-auto">Coordinate</label>
      <input id="coordinate" defaultValue="146500,3036061" className="ml-2 h-[43px] w-[218px] rounded-md border-2 border-[#a8a8a8] bg-white text-center outline-none" />
      <button type="button" aria-label="Toggle extents" className="ml-2">
        <svg viewBox="0 0 32 34" className="h-[34px] w-8" fill="none" stroke="#111" strokeWidth="2.500" aria-hidden="true">
          <ellipse cx="11" cy="10" rx="7" ry="9" transform="rotate(-25 11 10)" fill="#fff" />
          <path d="M8 4l6 12M12 3l4 12" />
          <path d="M10 20l10-7 6 8c3 9-10 15-15 6z" fill="#fff" strokeWidth="3" />
          <circle cx="18" cy="25" r="2.500" />
          <path d="M22 8l3-2M27 3l2-1M25 11l3 0M2 21l4 2M7 14l-3 4" strokeDasharray="3 2" />
        </svg>
      </button>
      <label htmlFor="scale" className="ml-[26px]">Scale</label>
      <div className="ml-2 flex h-[47px] w-[188px] overflow-hidden rounded-md border-2 border-[#a8a8a8] bg-white">
        <input id="scale" defaultValue="1:490072" className="min-w-0 flex-1 pl-[6px] outline-none" />
        <button type="button" aria-label="Scale list" className="flex w-[41px] items-center justify-center border-l-2 border-[#c2c2c2] bg-linear-to-b from-white to-[#e9e9e9]">
          <Caret />
        </button>
      </div>
      <button type="button" aria-label="Lock scale" className="ml-6">
        <svg viewBox="0 0 24 30" className="h-[30px] w-6" fill="none" aria-hidden="true">
          <path d="M5 15V9C5-1 19-1 19 9v6" stroke="#888" strokeWidth="3" />
          <rect x="0" y="14" width="24" height="16" rx="2" fill="#666" />
        </svg>
      </button>
      <label htmlFor="magnifier" className="ml-[18px]">Magnifier</label>
      <div className="ml-1">
        <Spinner id="magnifier" value="100%" width="w-[189px]" />
      </div>
      <label htmlFor="rotation" className="ml-5">Rotation</label>
      <div className="ml-5">
        <Spinner id="rotation" value="0.0 °" width="w-[182px]" />
      </div>
      <label className="ml-3 flex items-center gap-[10px]">
        <input
          type="checkbox"
          defaultChecked
          className="peer sr-only"
        />
        <svg viewBox="0 0 28 28" className="size-7" aria-hidden="true">
          <rect x="1" y="1" width="26" height="26" fill="#fff" stroke="#b0b0b0" strokeWidth="2" />
          <path d="M7 14l5 7 8-16" fill="none" stroke="#333" strokeWidth="3" />
        </svg>
        Render
      </label>
      <button type="button" className="ml-8 flex items-center gap-1">
        <svg viewBox="0 0 32 28" className="h-7 w-8" fill="none" stroke="#707070" strokeWidth="2" aria-hidden="true">
          <ellipse cx="16" cy="15" rx="10" ry="12" />
          <path d="M16 1v26M11 2c-5 8-5 18 0 24M21 2c5 8 5 18 0 24M6 20h20" />
          <path d="M11 2h10l9 10c-6 6-22 6-28 0z" fill="#ccc" fillOpacity=".6" />
          <path d="M4 9h24M8 5h16M16 2v14M12 2l-4 13M20 2l4 13" />
        </svg>
        EPSG:32644
      </button>
      <button type="button" aria-label="Messages" className="ml-[46px]">
        <svg viewBox="0 0 34 32" className="h-8 w-[34px]" aria-hidden="true">
          <ellipse cx="17" cy="13" rx="16" ry="13" fill="#666" />
          <path d="M16 22c3 5 6 8 15 9c-4-3-5-7-4-12z" fill="#666" />
        </svg>
      </button>
    </footer>
  );
}

/* ---------- data source dialog ---------- */

const sources: { name: string; icon: React.ReactNode }[] = [
  { name: "Browser", icon: <Folder /> },
  { name: "Vector", icon: <VectorIcon /> },
  { name: "Raster", icon: <Raster /> },
  { name: "Mesh", icon: <Mesh /> },
  { name: "Delimited Text", icon: <Comma /> },
  { name: "GeoPackage", icon: <Gpkg /> },
  { name: "SpatiaLite", icon: <Feather /> },
  { name: "PostgreSQL", icon: <Postgres /> },
  { name: "MSSQL", icon: <MsSql /> },
  { name: "DB2", icon: <Db2 /> },
  { name: "Virtual Layer", icon: <Virtual /> },
  { name: "WMS/WMTS", icon: <Wms /> },
  { name: "WCS", icon: <Wcs /> },
  { name: "WFS", icon: <Wfs /> },
  { name: "ArcGIS Map Server", icon: <ArcMap /> },
  { name: "ArcGIS Feature Server", icon: <ArcFeature /> },
  { name: "GeoNode", icon: <GeoNode /> },
];

function Sidebar() {
  return (
    <nav aria-label="Data sources" className="flex w-[516px] shrink-0 flex-col overflow-hidden bg-[#5b5b5b] text-[24px] leading-7">
      {sources.map((s) =>
        s.name === "Vector" ? (
          <button key={s.name} type="button" aria-current="page" className="flex h-[72px] shrink-0 items-center gap-3 bg-[#ebebeb] pt-[2px] pl-3 text-black">
            <span className="size-14 opacity-80">{s.icon}</span>
            {s.name}
          </button>
        ) : (
          <button key={s.name} type="button" className="flex h-[72px] shrink-0 items-center gap-3 pt-[2px] pl-[6px] text-white">
            <span className="size-14">{s.icon}</span>
            {s.name}
          </button>
        ),
      )}
    </nav>
  );
}

function ScrollStrip() {
  return (
    <div className="flex w-7 shrink-0 flex-col border-l border-[#c0c0c0] bg-linear-to-r from-white to-[#ececec]">
      <button type="button" aria-label="Scroll up" className="flex h-[27px] shrink-0 rotate-180 items-center justify-center border-t-2 border-[#b8b8b8] bg-white">
        <Caret />
      </button>
      <div className="flex-1" />
      <div className="h-[67px] shrink-0 border-y-2 border-[#c0c0c0] bg-[#e4e4e4]" />
      <button type="button" aria-label="Scroll down" className="flex h-[29px] shrink-0 items-center justify-center bg-white">
        <Caret />
      </button>
    </div>
  );
}

function Radio({ checked, children }: Kids & { checked?: boolean }) {
  return (
    <label className="flex items-center gap-3 text-[#222]">
      <input
        type="radio"
        name="source-type"
        defaultChecked={checked}
        className="size-7 appearance-none rounded-full border-2 border-[#a3a3a3] bg-white checked:bg-[radial-gradient(circle,#444_0_7px,#fff_8px)]"
      />
      <span>{children}</span>
    </label>
  );
}

const U = ({ children }: Kids) => <span className="underline decoration-1 underline-offset-4">{children}</span>;

const pushButton = "h-12 w-40 rounded-md border-2 border-[#a8a8a8] bg-linear-to-b from-white to-[#e9e9e9] pt-[2px] text-[#222]";
const panel = "border-2 border-[#d4d4d4] bg-[#e8e8e8] pr-[26px] pl-6";

function Dialog() {
  return (
    <section
      role="dialog"
      aria-labelledby="dialog-title"
      className="absolute top-[391px] right-[17.95%] left-[22.5%] flex h-[1245px] flex-col overflow-hidden rounded-xl bg-[#ebebeb] text-[25px] text-black shadow-[0_0_1px_1px_rgba(0,0,0,0.25),0_44px_90px_rgba(0,0,0,0.4)]"
    >
      <header className="grid h-[45px] shrink-0 grid-cols-[1fr_auto_1fr] items-center border-b-2 border-[#adadad] bg-linear-to-b from-[#e6e6e6] to-[#cfcfcf] px-4 pt-[3px]">
        <div className="flex gap-4">
          <button type="button" aria-label="Close window" className="size-6 rounded-full border border-[#e2463f] bg-[#ff5f57]" />
          <button type="button" aria-label="Minimize window" className="size-6 rounded-full border border-[#b4b4b4] bg-[#cfcfcf]" />
          <button type="button" aria-label="Zoom window" className="size-6 rounded-full border border-[#1aab29] bg-[#28c940]" />
        </div>
        <h1 id="dialog-title" className="text-[26px] leading-8 text-[#444]">Data Source Manager | Vector</h1>
      </header>
      <div className="flex min-h-0 flex-1">
        <Sidebar />
        <ScrollStrip />
        <div className="flex w-[14px] shrink-0 flex-col items-center justify-center gap-1" aria-hidden="true">
          {Array.from({ length: 6 }, (_, i) => (
            <span key={i} className="size-[2px] bg-[#b8b8b8]" />
          ))}
        </div>
        <div className="flex min-w-0 flex-1 flex-col pt-8 pr-[29px] pb-7 pl-[18px]">
          <h2 className="text-[26px] leading-8 font-bold">Source Type</h2>
          <div className={panel + " mt-1 h-[193px] pt-[46px]"}>
            <div className="flex h-9 items-center gap-5 text-[26px]">
              <Radio checked>
                F<U>i</U>le
              </Radio>
              <Radio>
                <U>D</U>irectory
              </Radio>
              <Radio>
                Da<U>t</U>abase
              </Radio>
              <Radio>
                Protoco<U>l</U>: HTTP(S), cloud, etc.
              </Radio>
            </div>
            <div className="mt-[35px] flex h-12 items-center justify-between">
              <label htmlFor="encoding">Encoding</label>
              <div className="grid w-[682px] items-center">
                <select id="encoding" className="col-start-1 row-start-1 h-12 appearance-none rounded-md border-2 border-[#a8a8a8] bg-linear-to-b from-white to-[#e9e9e9] pl-2 outline-none">
                  <option>Automatic</option>
                </select>
                <span className="pointer-events-none col-start-1 row-start-1 mr-[14px] justify-self-end">
                  <Caret />
                </span>
              </div>
            </div>
          </div>
          <h2 className="mt-[17px] text-[26px] leading-8 font-bold">Source</h2>
          <div className={panel + " mt-1 flex h-[101px] items-center"}>
            <label htmlFor="dataset" className="shrink-0">Vector Dataset(s)</label>
            <div className="ml-4 flex h-12 min-w-0 flex-1 items-center rounded-md border-2 border-[#a8a8a8] bg-white">
              <input
                id="dataset"
                defaultValue="/Users/adityadutt/Documents/custom_model/UP/india-village-census-2001-UP.shp"
                className="min-w-0 flex-1 outline-none"
              />
              <button type="button" aria-label="Clear" className="mr-4 ml-4">
                <svg viewBox="0 0 26 20" className="h-5 w-[26px]" aria-hidden="true">
                  <path d="M0 10L7 0h19v20H7z" fill="#999" />
                  <path d="M10 4l11 12M21 4L10 16" stroke="#fff" strokeWidth="2" />
                </svg>
              </button>
            </div>
            <button type="button" aria-label="Browse for file" className="ml-3 h-[38px] w-[46px] rounded-md border-2 border-[#a8a8a8] bg-linear-to-b from-white to-[#e9e9e9] text-[20px] leading-none">
              ...
            </button>
          </div>
          <div className="mt-auto flex gap-3">
            <button type="button" className={pushButton}>Help</button>
            <button type="button" className="ml-auto h-12 w-40 rounded-md border-2 border-[#3f9bea] bg-linear-to-b from-white to-[#dfe5f0] pt-[2px] text-[#222]">
              <U>A</U>dd
            </button>
            <button type="button" className={pushButton}>Close</button>
          </div>
        </div>
      </div>
    </section>
  );
}

/* ---------- page ---------- */

export default function App() {
  return (
    <div className="relative flex h-screen w-full flex-col overflow-hidden bg-[#ebebeb] font-['Inter','Noto_Sans',sans-serif] text-[#1e1e1e]">
      <Bar>
        <Group label="Project">
          <Tool label="New project"><NewDoc /></Tool>
          <Tool label="Open project"><Folder /></Tool>
          <Tool label="Save project"><Save /></Tool>
          <Tool label="New layout"><NewLayout /></Tool>
          <Tool label="Layout manager"><LayoutManager /></Tool>
          <Tool label="Style manager"><StyleManager /></Tool>
        </Group>
        <Group label="Map navigation">
          <Tool label="Pan map" active><Hand /></Tool>
          <Tool label="Pan to selection"><PanSelection /></Tool>
          <Tool label="Zoom in"><ZoomIn /></Tool>
          <Tool label="Zoom out"><ZoomOut /></Tool>
          <Tool label="Zoom full"><ZoomFull /></Tool>
          <Tool label="Zoom to selection"><ZoomSelection /></Tool>
          <Tool label="Zoom to layer" off><ZoomLayer /></Tool>
          <Tool label="Zoom to native resolution" off><ZoomNative /></Tool>
          <Tool label="Zoom last"><ZoomArrow /></Tool>
          <Tool label="Zoom next" off><ZoomArrow next /></Tool>
          <Tool label="New map view"><NewMapView /></Tool>
          <Tool label="New bookmark"><NewBookmark /></Tool>
          <Tool label="Show bookmarks"><Bookmarks /></Tool>
          <Tool label="Refresh"><Refresh /></Tool>
        </Group>
        <Group label="Attributes">
          <Tool label="Identify features" off><Identify /></Tool>
          <Tool label="Run feature action" off menu><RunAction /></Tool>
          <Tool label="Select features" off menu><SelectFeatures /></Tool>
          <Tool label="Select by value" off menu><SelectByValue /></Tool>
          <Tool label="Deselect features"><Deselect /></Tool>
          <Tool label="Open attribute table" off><AttributeTable /></Tool>
          <Tool label="Field calculator" off><Abacus /></Tool>
          <Tool label="Processing toolbox"><Toolbox /></Tool>
          <Tool label="Statistics"><Sigma /></Tool>
          <Tool label="Measure" menu><Measure /></Tool>
          <Tool label="Map tips"><MapTip /></Tool>
          <Tool label="Text annotation" menu><TextAnnotation /></Tool>
        </Group>
      </Bar>
      <Bar>
        <Group label="Data sources">
          <Tool label="Data source manager"><DataSource /></Tool>
          <Tool label="New GeoPackage layer"><Gpkg star /></Tool>
          <Tool label="New shapefile layer"><VectorIcon star /></Tool>
          <Tool label="New SpatiaLite layer"><Feather star /></Tool>
          <Tool label="New scratch layer"><Chip /></Tool>
          <Sep />
          <Tool label="New virtual layer"><Virtual star /></Tool>
        </Group>
        <Group label="Digitizing">
          <Tool label="Current edits" off corner><Edits /></Tool>
          <Tool label="Toggle editing" off><Edit /></Tool>
          <Tool label="Save layer edits" off><SaveEdits /></Tool>
          <Tool label="Add feature" off><AddFeature /></Tool>
          <Tool label="Vertex tool" off menu><Vertex /></Tool>
          <Tool label="Modify attributes" off><ModifyAttributes /></Tool>
          <Tool label="Delete selected" off><Trash /></Tool>
          <Tool label="Cut features" off><Cut /></Tool>
          <Tool label="Copy features" off><Copy /></Tool>
          <Tool label="Paste features" off><Paste /></Tool>
          <Tool label="Undo" off><Undo /></Tool>
          <Tool label="Redo" off><Undo redo /></Tool>
        </Group>
        <Group label="Labels">
          <Tool label="Layer labeling" off><TagOnly /></Tool>
          <Tool label="Layer diagrams" off><Diagram /></Tool>
          <Sep />
          <Tool label="Highlight pinned labels"><PinnedLabel /></Tool>
          <Tool label="Toggle unplaced labels"><RedLabel /></Tool>
          <Sep />
          <Tool label="Pin labels" off><PinLabel /></Tool>
          <Tool label="Show or hide labels" off><ShowLabel /></Tool>
          <Tool label="Move label" off><BadgeLabel kind="move" /></Tool>
          <Tool label="Rotate label" off><BadgeLabel kind="rotate" /></Tool>
          <Tool label="Change label" off><BadgeLabel kind="change" /></Tool>
        </Group>
        <Group label="Web">
          <Tool label="MetaSearch"><MetaSearch /></Tool>
        </Group>
        <Group label="Plugins">
          <Tool label="Python console"><Python /></Tool>
          <Tool label="Downloads"><Downloads /></Tool>
        </Group>
        <Group label="Help">
          <Tool label="Help contents"><HelpBook /></Tool>
        </Group>
        <div className="flex items-center">
          <Grip />
        </div>
      </Bar>
      <div className="flex min-h-0 flex-1">
        <LayersPanel />
        <main className="mr-px ml-[13px] flex-1 border border-[#b5b5b5] bg-white" aria-label="Map canvas" />
      </div>
      <StatusBar />
      <Dialog />
    </div>
  );
}
